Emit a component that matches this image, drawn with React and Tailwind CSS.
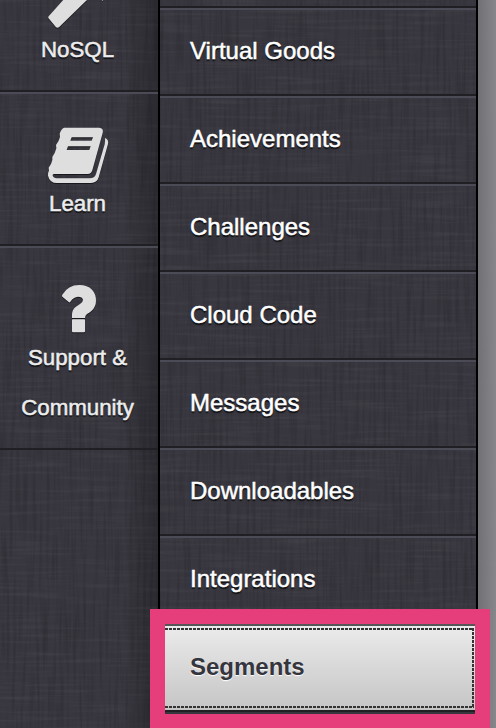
const menu = ['Virtual Goods', 'Achievements', 'Challenges', 'Cloud Code', 'Messages', 'Downloadables', 'Integrations'];

function Linen() {
  return (
    <svg className="pointer-events-none absolute inset-0 h-full w-full" aria-hidden="true">
      <filter id="weftThreads" x="0" y="0" width="100%" height="100%" colorInterpolationFilters="sRGB">
        <feTurbulence type="fractalNoise" baseFrequency="0.015 0.3" numOctaves="2" seed="4" />
        <feColorMatrix values="0 0 0 0 1  0 0 0 0 1  0 0 0 0 1  0.7 0 0 0 -0.32" />
      </filter>
      <filter id="warpThreads" x="0" y="0" width="100%" height="100%" colorInterpolationFilters="sRGB">
        <feTurbulence type="fractalNoise" baseFrequency="0.3 0.015" numOctaves="2" seed="9" />
        <feColorMatrix values="0 0 0 0 0  0 0 0 0 0  0 0 0 0 0  1.3 0 0 0 -0.58" />
      </filter>
      <rect width="100%" height="100%" filter="url(#weftThreads)" opacity="0.14" />
      <rect width="100%" height="100%" filter="url(#warpThreads)" opacity="0.26" />
    </svg>
  );
}

function Wand() {
  return (
    <svg viewBox="0 0 80 30" className="h-[30px] w-20 shrink-0 drop-shadow-[0_1px_0_#19191d]" fill="#dedede">
      <path d="M26-2 9.700 16.200Q8.800 17.500 9.800 18.600L16.800 27Q18.500 28.600 20.200 27L50-2Z" />
      <path d="m62-2 1.300 3L65-2Z" />
    </svg>
  );
}

function Book() {
  return (
    <svg viewBox="0 0 186 171" className="mr-0.5 h-[57px] w-[62px] shrink-0 overflow-visible drop-shadow-[0_1px_0_#19191d]" fill="#dedede" fillRule="evenodd">
      <path d="M52 2H156Q171 3 167 18L136 130Q133 141 122 141H21Q16 141 17 146Q20 154 34 154H128Q143 154 147 141L173 52Q175 42 174 33Q186 38 183 51L155 151Q150 168 132 168H30Q8 168 3 146Q2 137 6 131L5 122Q14 110 16 99L16 90Q25 77 28 64L27 54Q36 43 39 30L38 20Q44 3 52 2Z M74 31L70 41H134L138 31Z M63 58L59 69H127L131 58Z" />
    </svg>
  );
}

function Question() {
  return (
    <svg viewBox="0 0 102 144" className="h-12 w-[34px] shrink-0 overflow-visible drop-shadow-[0_1px_0_#19191d]" fill="#dedede">
      <path d="M1 29Q18 0 52 0Q76 0 90 14Q102 27 102 47Q102 65 89 77Q83 82 75 87Q69 91 69 99H30V88Q30 74 42 65L55 56Q63 51 63 44Q61 35 48 35Q39 35 31 43Q26 49 24 52Q22 53 20 51L1 35Q-1 33 1 29Z M32 103H67Q69 103 69 105V139Q69 142 66 142H33Q30 142 30 139V105Q30 103 32 103Z" />
    </svg>
  );
}

const sideText = 'mr-[3px] text-center text-[22.3px] leading-[50px] text-[#ededed] [-webkit-text-stroke:0.5px_#ededed] [text-shadow:0_2px_1px_#141417]';

export default function App() {
  return (
    <div className="relative flex h-[728px] w-[496px] overflow-hidden bg-[#38373f] font-['Liberation_Sans',Arial,sans-serif] antialiased">
      <Linen />
      <nav className="relative flex w-[158px] shrink-0 flex-col bg-linear-to-r from-transparent from-78% to-black/25">
        <div className="flex h-[92px] flex-col items-center border-b-2 border-[#202024]">
          <div className="h-[25px]">
            <Wand />
          </div>
          <span className={sideText}>NoSQL</span>
        </div>
        <div className="flex h-[154px] flex-col items-center border-t-2 border-b-2 border-t-[#4b4b55] border-b-[#202024] pt-[33px]">
          <div className="h-[52px]">
            <Book />
          </div>
          <span className={sideText}>Learn</span>
        </div>
        <div className="flex h-[204px] flex-col items-center border-t-2 border-b-2 border-t-[#4b4b55] border-b-[#202024] pt-[37px]">
          <div className="h-12">
            <Question />
          </div>
          <span className={sideText}>
            Support &amp;
            <br />
            Community
          </span>
        </div>
      </nav>
      <main className="relative flex w-[320px] shrink-0 flex-col border-x-2 border-black">
        <div className="h-2 shrink-0 border-b-2 border-[#202024]" />
        {menu.map((label) => (
          <a key={label} className="flex h-[88px] shrink-0 items-center border-t-2 border-b-2 border-t-[#4b4b55] border-b-[#202024] pb-0.5 pl-[30px] text-[24px] text-white [-webkit-text-stroke:0.5px_white] [text-shadow:0_2px_1px_#101012]">
            {label}
          </a>
        ))}
      </main>
      <aside className="relative flex-1 bg-linear-to-r from-[#737378]/95 to-[#8b8b8f]/95" />
      <div className="absolute top-[609px] left-[150px] h-[120px] w-[340px] bg-[#e63e7a] px-[15px] pt-[15px]">
        <div className="h-[90px] border-t-2 border-[#555558] bg-[#37363f]">
          <a className="relative flex h-[86px] items-center border-b-2 border-[#202024] bg-linear-to-b from-[#ebebeb] to-[#c5c5c5] pb-0.5 pl-[25px] text-[24px] font-bold text-[#35353e] [text-shadow:0_1px_1px_#fff]">
            Segments
            <svg className="absolute inset-0 h-[84px] w-[310px]" fill="none" stroke="#333" strokeWidth="2" strokeDasharray="3 1">
              <path d="M0 3H309M308 2V82M0 81H309" />
            </svg>
          </a>
        </div>
      </div>
    </div>
  );
}
